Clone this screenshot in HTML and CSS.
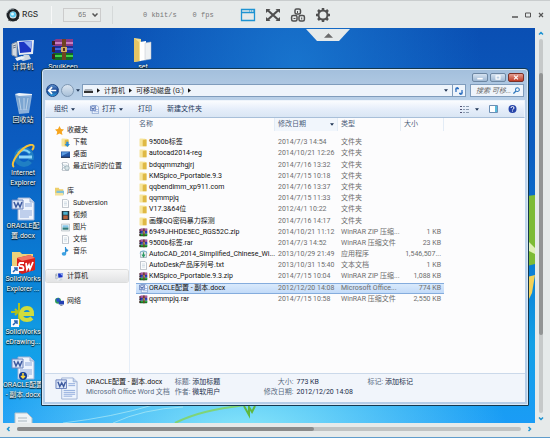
FILE: index.html
```html
<!DOCTYPE html>
<html lang="zh-CN">
<head>
    <meta charset="UTF-8">
    <meta name="viewport" content="width=device-width, initial-scale=1.0">
    <title>RGS</title>
    <link rel="stylesheet" href="styles.css">
</head>
<body>
    <!-- Shared icons -->
    <svg class="sprite" aria-hidden="true">
        <symbol id="i-folder" viewBox="0 0 12 12">
            <path d="M1 1h7l2 1v9H1z" fill="#f3dc86"/>
            <path d="M1 1h4v10H1z" fill="#f7e59a"/>
            <path d="M5 3l5-1v9H5z" fill="#dfb945"/>
        </symbol>
        <symbol id="i-rar" viewBox="0 0 24 24">
            <path d="M2 3l3-2h17v7H2z" fill="#8b3a86"/>
            <path d="M3 4h19v2H3z" fill="#c77fc0"/>
            <path d="M2 8h20v7H2z" fill="#1b2e96"/>
            <path d="M4 10h18v2H4z" fill="#4463dc"/>
            <path d="M2 15h20v6l-2 1H2z" fill="#116b24"/>
            <path d="M4 17h18v2H4z" fill="#3cd047"/>
            <path d="M1 3h3v4H1zM1 9h3v5H1zM1 16h3v5H1z" fill="#42201f"/>
            <path d="M11 1h4v21h-4z" fill="#6e4322"/>
            <path d="M10 9h6v5h-6z" fill="#d0ad62"/>
            <path d="M12 10h2v3h-2z" fill="#553018"/>
        </symbol>
        <symbol id="i-word" viewBox="0 0 24 24">
            <path d="M7 1h12l4 4v18H7z" fill="#eef4fd" stroke="#9eb2d4"/>
            <path d="M19 1v4h4" fill="#c5d4ee" stroke="#9eb2d4"/>
            <path d="M14 7h7M14 9h7M9 14h12M9 16h12M9 18h12M9 20h9" stroke="#8faadb"/>
            <path d="M1 3h11v9H1z" fill="#dce6f8" stroke="#6d84bd"/>
            <path d="M3 5l2 5 2-4 2 4 2-5" fill="none" stroke="#3d5a9f" stroke-width="1.5"/>
        </symbol>
        <symbol id="i-word-small" viewBox="0 0 12 12">
            <path d="M3 .5h6l2.500 2.500v8.500H3z" fill="#f4f8fe" stroke="#7f9ccc"/>
            <path d="M8 6h3M5 9h6" stroke="#8faadb"/>
            <path d="M.5 1.500h7v6h-7z" fill="#dfe8f8" stroke="#4f6db2"/>
            <path d="M2 3l1 3 1-2 1 2 1-3" fill="none" stroke="#2d4d9a"/>
        </symbol>
        <symbol id="i-monitor" viewBox="0 0 24 24">
            <path d="M1 6l5-2v15l-5-2z" fill="#d4dae0" stroke="#8b98a8"/>
            <path d="M2 8l3-1M2 10l3-1" stroke="#6a7788"/>
            <path d="M6 3l17-1-1 14-14 1z" fill="#e8edf2"/>
            <path d="M8 4l13-1-1 11-11 1z" fill="#1b35c4"/>
            <path d="M13 4l8-1-1 8z" fill="#90adf4"/>
            <path d="M13 17h5l2 4-8 2-3-2z" fill="#ced7df"/>
            <path d="M4 20l7-2 3 2-8 3z" fill="#edf1f4"/>
        </symbol>
        <symbol id="i-page" viewBox="0 0 12 12">
            <path d="M2 .5h6l2 2v9H2z" fill="#fbfcfd" stroke="#a9b2bb"/>
            <path d="M4 4h4M4 6h4M4 8h4" stroke="#b2c4d4" stroke-width=".7"/>
        </symbol>
        <symbol id="i-down" viewBox="0 0 6 4"><path d="M0 0h6L3 4z" fill="#1f3454"/></symbol>
        <symbol id="i-right" viewBox="0 0 4 6"><path d="M0 0v6l4-3z" fill="#111"/></symbol>
    </svg>

    <div class="client">
        <!-- Client toolbar -->
        <header class="topbar">
            <svg class="logo" viewBox="0 0 14 14">
                <circle cx="7" cy="7" r="5" fill="none" stroke="#1d2226" stroke-width="3"/>
                <path d="M1 5a6 6 0 0 1 7-4" fill="none" stroke="#9aa4aa" stroke-width="1"/>
                <circle cx="7" cy="6.500" r="3" fill="#5cc8ee"/>
                <circle cx="6.500" cy="6" r="1.500" fill="#d4f5ff"/>
                <path d="M2 12l3 1M10 13l3-3" stroke="#555" stroke-width="1"/>
            </svg>
            <span class="brand">RGS</span>
            <label class="quality">
                <select aria-label="Quality"><option>65</option></select>
                <svg viewBox="0 0 6 4"><path d="M.5.5L3 3 5.500.5" fill="none" stroke="#555" stroke-width="1.500"/></svg>
            </label>
            <span class="stat rate">0 kbit/s</span>
            <span class="stat fps">0 fps</span>
            <div class="tools">
                <button aria-label="Window">
                    <svg viewBox="0 0 16 14"><path d="M1.500 1.500h13v11h-13zM1.500 4.500h13" fill="none" stroke="#1e93d2" stroke-width="1.300"/><path d="M9 3h1M11 3h1M13 3h1" stroke="#1e93d2"/></svg>
                </button>
                <button aria-label="Full screen">
                    <svg viewBox="0 0 16 14"><path d="M3 2.500l10 9M13 2.500l-10 9" stroke="#505050" stroke-width="2.200"/><path d="M1 1h4.500L1 5zM15 1h-4.500L15 5zM1 13h4.500L1 9zM15 13h-4.500L15 9z" fill="#505050"/></svg>
                </button>
                <button aria-label="Send keys">
                    <svg viewBox="0 0 16 14"><g fill="none" stroke="#505050" stroke-width="1.500"><rect x="5" y="1" width="5.500" height="5" rx="1.500"/><rect x="1.600" y="7.500" width="5.400" height="5.500" rx="1.500"/><rect x="9" y="7.500" width="5.400" height="5.500" rx="1.500"/><path d="M7.500 3v2M3.500 10.500h2M11.700 9.500v2" stroke-width="1"/></g></svg>
                </button>
                <button aria-label="Settings">
                    <svg viewBox="0 0 16 14"><circle cx="8" cy="7" r="4.500" fill="none" stroke="#505050" stroke-width="2"/><path d="M8 0v2.500M8 11.500V14M1 7h2.500M12.500 7H15M3 2l2 2M11 10l2 2M13 2l-2 2M5 10l-2 2" stroke="#505050" stroke-width="2.500"/></svg>
                </button>
            </div>
            <div class="controls">
                <button aria-label="Minimize"><svg viewBox="0 0 6 6"><path d="M0 5h6" stroke="#555" stroke-width="1.500"/></svg></button>
                <button aria-label="Maximize"><svg viewBox="0 0 6 6"><path d="M.5 1h5v4h-5z" fill="none" stroke="#555"/></svg></button>
                <button aria-label="Close"><svg viewBox="0 0 6 6"><path d="M1 1l4 4M5 1L1 5" stroke="#555" stroke-width="1.200"/></svg></button>
            </div>
            <button class="tab" aria-label="Hide toolbar"><svg viewBox="0 0 10 5"><path d="M0 5l5-5 5 5z" fill="#6b6b6b"/></svg></button>
        </header>

        <!-- Remote desktop -->
        <main class="desktop">
            <svg class="wallpaper" viewBox="0 0 532 395" preserveAspectRatio="none" aria-hidden="true">
                <path d="M172 395c20-10 40-14 70-18" fill="none" stroke="#7fd477" stroke-width="2"/>
                <path d="M110 395q30-14 70-16M60 395q50-6 90-18" fill="none" stroke="#bff2f5" opacity=".6"/>
                <path d="M241 378l5 9v-8l3 5 3-6" fill="none" stroke="#5fb83e" stroke-width="2"/>
                <path d="M524 168l8-1v69l-8 2z" fill="#7dbb35"/>
                <path d="M524 212l8 8v6l-8-4z" fill="#dff0b4"/>
                <path d="M524 249l8-2-3 18-5 10z" fill="#f3d257"/>
            </svg>
            <div class="icons">
                <button><svg><use href="#i-monitor"/></svg>计算机</button>
                <button>
                    <svg viewBox="0 0 24 24"><path d="M4 3l17 1-3 18-10 1z" fill="#b8cfe4" opacity=".75"/><path d="M5 5l14 1-2 12H8z" fill="#6f9dcc" opacity=".6"/><path d="M4 3l4-1 13 1v1L8 5z" fill="#eef4fa"/><path d="M8 7l2 12M13 7v12M17 7l-2 12" stroke="#e4eef8" opacity=".6"/></svg>回收站
                </button>
                <button>
                    <svg viewBox="0 0 24 24"><circle cx="13" cy="13" r="7.500" fill="none" stroke="#1f7fc4" stroke-width="5"/><path d="M7 9q6-6 12 0" fill="none" stroke="#7fd0f5" stroke-width="2"/><path d="M8 13h13" stroke="#8fd6f8" stroke-width="3"/><path d="M17 16h6l-2 3z" fill="#0c5fba"/><path d="M3 23C-2 20 10 3 19 1c5-1 4 3 2 5" fill="none" stroke="#f3c23a" stroke-width="2"/></svg>Internet Explorer
                </button>
                <button><svg><use href="#i-word"/></svg>ORACLE配<br>置.docx</button>
                <button>
                    <svg viewBox="0 0 24 24"><path d="M1 2h8l2 2h11v17H1z" fill="#ecd27b"/><path d="M6 8l13-3 5 3v12l-13 4-5-3z" fill="#d9201d"/><path d="M6 8l13-3 5 3-13 3z" fill="#f37562"/><path d="M13 13H9q-2 2 0 3 5 0 3 4H8M15 13l1 6 2-4 1 4 3-7" fill="none" stroke="#fff" stroke-width="1.800"/><path d="M0 16h8v8H0z" fill="#f6f9fc"/><path d="M2 22l4-4M3 18h3v3" fill="none" stroke="#2565b5" stroke-width="1.500"/></svg>SolidWorks<br>Explorer ...
                </button>
                <button>
                    <svg viewBox="0 0 24 24"><path d="M8 0v22M0 9h6M4 6l3 3-3 3" fill="none" stroke="#b0c11b" stroke-width="2"/><path d="M12 11h9q0-6-5-6t-6 6q0 6 6 6 3 0 5-2" fill="none" stroke="#cfdc3d" stroke-width="4"/><path d="M0 16h8v8H0z" fill="#f6f9fc"/><path d="M2 22l4-4M3 18h3v3" fill="none" stroke="#2565b5" stroke-width="1.500"/></svg>SolidWorks<br>eDrawing...
                </button>
                <button>
                    <svg viewBox="0 0 24 24"><use href="#i-word"/><circle cx="12" cy="20" r="4" fill="#123d94"/><path d="M12 17v5M10 20l2 2 2-2" fill="none" stroke="#ffd93a" stroke-width="1.500"/></svg>ORACLE配置<br>- 副本.docx
                </button>
                <button><svg viewBox="0 0 24 24"><path d="M4 4h12l5 5v15H4z" fill="#eef3f6" stroke="#b3c1ca"/><path d="M7 9h9M7 12h9" stroke="#a9b7c0"/></svg></button>
                <button class="second"><svg><use href="#i-rar"/></svg>SoulKeep</button>
                <button class="fourth">
                    <svg viewBox="0 0 24 24"><path d="M3 0l7 1v22l-7 1z" fill="#f4df91"/><path d="M9 4l6-1v19l-6 1z" fill="#fff"/><path d="M14 5l6-1v17l-6 1z" fill="#eef1f3" stroke="#bcc3c9" stroke-width=".5"/><path d="M3 0l5 4v19l-5 1z" fill="#e3c465"/></svg>set
                </button>
            </div>

            <!-- Explorer window -->
            <section class="window">
                <div class="titlebar">
                    <button aria-label="最小化"><svg viewBox="0 0 15 9"><path d="M4 6h7" stroke="#fff" stroke-width="2"/></svg></button>
                    <button aria-label="最大化"><svg viewBox="0 0 15 9"><path d="M5 2.500h5v4H5z" fill="none" stroke="#fff" stroke-width="1.500"/></svg></button>
                    <button class="close" aria-label="关闭"><svg viewBox="0 0 15 9"><path d="M5 2l5 5M10 2L5 7" stroke="#fff" stroke-width="1.500"/></svg></button>
                </div>
                <div class="navrow">
                    <button class="round back" aria-label="后退"><svg viewBox="0 0 13 13"><path d="M2 6.500h9M6 2.500l-4 4 4 4" fill="none" stroke="#fff" stroke-width="2"/></svg></button>
                    <button class="round" aria-label="前进"></button>
                    <svg class="down"><use href="#i-down"/></svg>
                    <nav class="address">
                        <svg class="drive" viewBox="0 0 9 5"><path d="M1 1h7l1 2H0z" fill="#aab0b8"/><path d="M0 3h9v2H0z" fill="#333"/></svg>
                        <svg class="right"><use href="#i-right"/></svg>
                        <a href="#">计算机</a>
                        <svg class="right"><use href="#i-right"/></svg>
                        <a href="#">可移动磁盘 (G:)</a>
                        <svg class="right"><use href="#i-right"/></svg>
                        <svg class="down last"><use href="#i-down"/></svg>
                        <button class="refresh" aria-label="刷新"><svg viewBox="0 0 8 8"><path d="M1 5V1.500h3M.5 3L2.500 0M7 3v3.500H4M7.500 5l-2 3" fill="none" stroke="#2d6fc0" stroke-width="1.300"/></svg></button>
                    </nav>
                    <label class="search">
                        <input type="text" placeholder="搜索 可移..." aria-label="搜索">
                        <svg viewBox="0 0 8 8"><circle cx="5" cy="3" r="2.200" fill="none" stroke="#2f78bd" stroke-width="1.200"/><path d="M3.500 4.500L.5 7.500" stroke="#2f78bd" stroke-width="1.500"/></svg>
                    </label>
                </div>
                <div class="commands">
                    <button>组织 <svg class="down"><use href="#i-down"/></svg></button>
                    <button><svg class="cmd-word"><use href="#i-word-small"/></svg>打开 <svg class="down"><use href="#i-down"/></svg></button>
                    <button>打印</button>
                    <button>新建文件夹</button>
                    <div class="views">
                        <button aria-label="视图"><svg class="view" viewBox="0 0 9 8"><path d="M0 1.500h2M0 4.500h2M0 7.500h2" stroke="#557"/><path d="M3 1.500h2M6 1.500h3M3 4.500h2M6 4.500h3M3 7.500h2M6 7.500h3" stroke="#8a9bb0"/></svg><svg class="down"><use href="#i-down"/></svg></button>
                        <button aria-label="预览窗格"><svg class="view" viewBox="0 0 9 8"><path d="M.5.5h8v7h-8z" fill="#fff" stroke="#6d8fb4"/><path d="M6 1h2v6H6z" fill="#58bbdc"/></svg></button>
                        <button aria-label="帮助"><svg class="view" viewBox="0 0 9 8"><circle cx="4.500" cy="4" r="4" fill="#2644a9"/><path d="M3 3q0-1.500 1.500-1.500T6 3q0 1-1.500 1.500M4.500 5.500v1" fill="none" stroke="#fff"/></svg></button>
                    </div>
                </div>

                <div class="panes">
                    <nav class="tree">
                        <ul>
                            <li class="head"><a href="#"><svg viewBox="0 0 12 12"><path d="M6 0l2 4 4 .5-3 3 1 4.500-4-2-4 2 1-4.500-3-3L4 4z" fill="#f7a51e"/></svg>收藏夹</a></li>
                            <li><a href="#"><svg viewBox="0 0 12 12"><use href="#i-folder"/><path d="M7 5h3v3h2l-3.500 4L5 8h2z" fill="#288bd8"/></svg>下载</a></li>
                            <li><a href="#"><svg viewBox="0 0 12 12"><path d="M0 2h12v8H0z" fill="#2456a5"/><path d="M1 3h10L1 8z" fill="#5c9de2"/><path d="M0 9h12v1.500H0z" fill="#1b2b4c"/></svg>桌面</a></li>
                            <li><a href="#"><svg viewBox="0 0 12 12"><use href="#i-page"/><path d="M1 2l4 4-4 4" fill="none" stroke="#9ab0bb"/><circle cx="8" cy="8" r="3" fill="#d8e5e8" stroke="#91a6ad"/></svg>最近访问的位置</a></li>
                        </ul>
                        <ul>
                            <li class="head"><a href="#"><svg viewBox="0 0 12 12"><path d="M0 1h5l1 2h5v8H0z" fill="#edcf6b"/><path d="M2 5h10v5H2z" fill="#7fc0d9"/><path d="M0 8h11v3H0z" fill="#f3e19b"/></svg>库</a></li>
                            <li><a href="#"><svg><use href="#i-page"/></svg>Subversion</a></li>
                            <li><a href="#"><svg viewBox="0 0 12 12"><path d="M1 0h10v12H1z" fill="#20343f"/><path d="M3 1h6v4H3z" fill="#4bb0cf"/><path d="M3 6h6v5H3z" fill="#b6613c"/></svg>视频</a></li>
                            <li><a href="#"><svg viewBox="0 0 12 12"><path d="M.5 1.500h11v9H.5z" fill="#fff" stroke="#a6b2ba"/><path d="M2 3h8v3H2z" fill="#83c5e8"/><path d="M2 6h8v3H2z" fill="#317c7b"/></svg>图片</a></li>
                            <li><a href="#"><svg><use href="#i-page"/></svg>文档</a></li>
                            <li><a href="#"><svg viewBox="0 0 12 12"><path d="M6 0q1 3 4 4-1 3-3 2v3z" fill="#2b8fd6"/><path d="M6 0v9" stroke="#2b8fd6" stroke-width="1.500"/><ellipse cx="4" cy="9" rx="3" ry="2.500" fill="#3fa2e2"/></svg>音乐</a></li>
                        </ul>
                        <ul>
                            <li class="head current"><a href="#"><svg><use href="#i-monitor"/></svg>计算机</a></li>
                        </ul>
                        <ul>
                            <li class="head"><a href="#"><svg viewBox="0 0 12 12"><circle cx="4" cy="5" r="4" fill="#2f9e57"/><path d="M1 3l4-2 2 4-4 2z" fill="#2a55c8"/><path d="M5 5h7v5H5z" fill="#2340b4"/><path d="M7 10h3v2H7z" fill="#8a94a5"/></svg>网络</a></li>
                        </ul>
                    </nav>

                    <div class="files">
                        <table>
                            <colgroup><col class="c-name"><col class="c-date"><col class="c-type"><col class="c-size"></colgroup>
                            <thead>
                                <tr><th>名称</th><th class="sorted">修改日期<svg class="down"><use href="#i-down"/></svg></th><th>类型</th><th>大小</th></tr>
                            </thead>
                            <tbody>
                                <tr><td><svg><use href="#i-folder"/></svg>9500b标签</td><td>2014/7/3 14:54</td><td>文件夹</td><td></td></tr>
                                <tr><td><svg><use href="#i-folder"/></svg>autocad2014-reg</td><td>2014/10/21 12:26</td><td>文件夹</td><td></td></tr>
                                <tr><td><svg><use href="#i-folder"/></svg>bdqqmmzhgjrj</td><td>2014/7/16 13:32</td><td>文件夹</td><td></td></tr>
                                <tr><td><svg><use href="#i-folder"/></svg>KMSpico_Pportable.9.3</td><td>2014/7/15 10:18</td><td>文件夹</td><td></td></tr>
                                <tr><td><svg><use href="#i-folder"/></svg>qqbendimm_xp911.com</td><td>2014/7/16 13:37</td><td>文件夹</td><td></td></tr>
                                <tr><td><svg><use href="#i-folder"/></svg>qqmmpjq</td><td>2014/7/15 11:33</td><td>文件夹</td><td></td></tr>
                                <tr><td><svg><use href="#i-folder"/></svg>V17.3&amp;64位</td><td>2012/4/1 10:22</td><td>文件夹</td><td></td></tr>
                                <tr><td><svg><use href="#i-folder"/></svg>画蝶QQ密码暴力探测</td><td>2014/7/16 14:17</td><td>文件夹</td><td></td></tr>
                                <tr><td><svg><use href="#i-rar"/></svg>6949JHHDE5EC_RGS52C.zip</td><td>2014/10/21 11:12</td><td>WinRAR ZIP 压缩...</td><td>1 KB</td></tr>
                                <tr><td><svg><use href="#i-rar"/></svg>9500b标签.rar</td><td>2014/7/3 14:52</td><td>WinRAR 压缩文件</td><td>23 KB</td></tr>
                                <tr><td><svg viewBox="0 0 12 12"><path d="M2 2h8v8H2z" fill="#e4eaee" stroke="#9aa8b0"/><path d="M6 3v5M4 6l2 3 2-3" fill="none" stroke="#2c9a63" stroke-width="1.500"/><path d="M1 4q5-6 10 0" fill="none" stroke="#5fb4d8"/></svg>AutoCAD_2014_Simplified_Chinese_Wi...</td><td>2013/10/29 21:49</td><td>应用程序</td><td>1,546,507...</td></tr>
                                <tr><td><svg><use href="#i-page"/></svg>AutoDesk产品序列号.txt</td><td>2013/10/31 15:40</td><td>文本文档</td><td>1 KB</td></tr>
                                <tr><td><svg><use href="#i-rar"/></svg>KMSpico_Pportable.9.3.zip</td><td>2014/7/15 10:04</td><td>WinRAR ZIP 压缩...</td><td>1,088 KB</td></tr>
                                <tr class="selected"><td><svg><use href="#i-word-small"/></svg>ORACLE配置 - 副本.docx</td><td>2012/12/20 14:08</td><td>Microsoft Office...</td><td>774 KB</td></tr>
                                <tr><td><svg><use href="#i-rar"/></svg>qqmmpjq.rar</td><td>2014/7/15 10:58</td><td>WinRAR 压缩文件</td><td>2,550 KB</td></tr>
                            </tbody>
                        </table>
                    </div>
                </div>

                <footer class="details">
                    <svg class="preview"><use href="#i-word"/></svg>
                    <div class="d-name"><strong>ORACLE配置 - 副本.docx</strong><span>Microsoft Office Word 文档</span></div>
                    <div class="d-author"><span>标题: <b>添加标题</b></span><span>作者: <b>微软用户</b></span></div>
                    <div class="d-size"><span>大小:</span><b>773 KB</b><span>修改日期:</span><b>2012/12/20 14:08</b></div>
                    <div><span>标记: <b>添加标记</b></span></div>
                </footer>
            </section>
        </main>

        <!-- Scroll bars -->
        <div class="vscroll">
            <svg viewBox="0 0 6 4"><path d="M1 3.500l2-2 2 2" fill="none" stroke="#1e93d2" stroke-width="1.500"/></svg>
            <div class="track"><div class="thumb"></div></div>
            <svg viewBox="0 0 6 4"><path d="M1 .5l2 2 2-2" fill="none" stroke="#1e93d2" stroke-width="1.500"/></svg>
        </div>
        <div class="hscroll">
            <svg viewBox="0 0 4 6"><path d="M3.500 1l-2 2 2 2" fill="none" stroke="#1e93d2" stroke-width="1.500"/></svg>
            <div class="track"><div class="thumb"></div></div>
            <svg viewBox="0 0 4 6"><path d="M.5 1l2 2-2 2" fill="none" stroke="#1e93d2" stroke-width="1.500"/></svg>
        </div>
    </div>
</body>
</html>
```

FILE: styles.css
```css
/* General */
* {
    box-sizing: border-box;
}

body {
    margin: 0;
    font-family: Roboto, "Noto Sans CJK SC", sans-serif;
    font-size: 7px;
    line-height: 10px;
    color: #222;
    background-color: #e6eaea;
}

svg {
    display: block;
    flex: none;
}

button {
    font: inherit;
    color: inherit;
    padding: 0;
    border: none;
    background: none;
    cursor: pointer;
}

a {
    color: inherit;
    text-decoration: none;
}

b {
    font-weight: normal;
    color: #1d2f4c;
}

.sprite {
    position: absolute;
    width: 0;
    height: 0;
}

.down {
    width: 4px;
    height: 3px;
}

.right {
    width: 3px;
    height: 5px;
}

/* Client frame */
.client {
    display: grid;
    grid-template-columns: 1fr 15px;
    grid-template-rows: 28px 1fr 11px;
    height: 100vh;
    padding-left: 3px;
    padding-bottom: 3px;
    border-top: 1px solid #c9cdce;
    border-bottom: 1px solid #5f9ccb;
}

/* Client toolbar */
.topbar {
    grid-column: 1 / 3;
    position: relative;
    z-index: 2;
    display: flex;
    align-items: center;
    margin-top: -1px;
    font-family: "Liberation Mono", monospace;
}

.logo {
    width: 14px;
    height: 14px;
    margin-left: 3px;
}

.brand {
    width: 29px;
    margin-left: 2px;
    font-size: 9px;
}

.quality {
    display: flex;
    align-items: center;
    padding-left: 11px;
    padding-right: 11px;
    border-left: 1px solid #f7f8f8;
    border-right: 1px solid #d5d9d9;
    height: 18px;
}

.quality select {
    appearance: none;
    width: 38px;
    height: 14px;
    padding: 0 14px;
    border: 1px solid #ccc;
    background-color: #e9eceb;
    font: inherit;
    color: #777;
}

.quality svg {
    width: 6px;
    height: 4px;
    margin-left: -9px;
    margin-right: 3px;
}

.stat {
    color: #777;
}

.rate {
    margin-left: 30px;
}

.fps {
    margin-left: 16px;
}

.tools {
    display: flex;
    gap: 9px;
    margin-left: 26px;
}

.tools svg {
    width: 16px;
    height: 14px;
}

.controls {
    display: flex;
    gap: 7px;
    margin-left: auto;
    margin-right: 6px;
}

.controls svg {
    width: 6px;
    height: 6px;
}

/* Pull-down tab that hangs over the desktop */
.tab {
    position: absolute;
    top: 100%;
    left: 303px;
    width: 44px;
    height: 12px;
    background-color: #e6eaea;
    clip-path: polygon(0 0, 100% 0, 75% 100%, 25% 100%);
}

.tab svg {
    width: 9px;
    height: 5px;
    margin: 0 auto;
}

/* Remote desktop */
.desktop {
    position: relative;
    overflow: hidden;
    margin-top: -1px;
    background-image:
        radial-gradient(ellipse 50% 30% at 45% 103%, rgba(150, 240, 250, 0.9), rgba(60, 200, 250, 0)),
        radial-gradient(ellipse at 55% 10%, rgba(30, 130, 215, 0.7), rgba(20, 110, 200, 0) 45%),
        linear-gradient(#0a4fb3, #0b5cc0 30%, #0a7dd4 60%, #12a0e6 80%, #1a9cf6);
}

.wallpaper {
    position: absolute;
    width: 100%;
    height: 100%;
}

.icons {
    position: relative;
    display: grid;
    grid-auto-flow: column;
    grid-template-rows: repeat(8, 53px);
    grid-template-columns: repeat(4, 40px);
    padding-top: 10px;
}

.icons button {
    display: flex;
    flex-direction: column;
    align-items: center;
    color: #fff;
    text-shadow: 0 1px 1px #000, 0 0 2px #033;
}

.icons svg {
    width: 24px;
    height: 24px;
}

.icons .fourth {
    grid-column: 4;
    grid-row: 1;
}

/* Explorer window */
.window {
    position: absolute;
    top: 40px;
    left: 38px;
    right: 6px;
    bottom: 17px;
    display: flex;
    flex-direction: column;
    padding: 0 3px 3px;
    border: 1px solid #14384f;
    border-radius: 4px 4px 1px 1px;
    background-image: linear-gradient(#a3bfdc, #b9d0e8 30px, #c3d8ee 130px, #b4cde8);
    box-shadow: inset 0 0 0 1px #d9e8f6;
}

.titlebar {
    display: flex;
    justify-content: flex-end;
    gap: 2px;
    padding: 4px 1px 2px;
}

.titlebar button {
    border: 1px solid #6d87a3;
    border-radius: 2px;
    background-image: linear-gradient(#d5e2f0, #9fb8d3);
}

.titlebar svg {
    width: 14px;
    height: 7px;
}

.titlebar .close {
    border-color: #7a3028;
    background-image: linear-gradient(#e3a093, #c03a25);
}

.navrow {
    display: flex;
    align-items: center;
    gap: 2px;
    padding: 0 1px 3px;
}

.round {
    width: 13px;
    height: 13px;
    border: 1px solid #7f98b3;
    border-radius: 50%;
    background-image: linear-gradient(#dbe6f1, #a9c0d8);
}

.back {
    border-color: #1d4585;
    background-image: linear-gradient(#5f93d0, #15408e 50%, #2fa0e0);
}

.back svg {
    width: 11px;
    height: 11px;
}

.address {
    flex: 1;
    display: flex;
    align-items: center;
    gap: 4px;
    height: 13px;
    padding-left: 1px;
    border: 1px solid #7f9cbc;
    background-color: #eef4fb;
}

.drive {
    width: 9px;
    height: 5px;
}

.last {
    margin-left: auto;
}

.refresh {
    height: 11px;
    padding: 0 2px;
    border-left: 1px solid #7f9cbc;
}

.refresh svg {
    width: 8px;
    height: 8px;
}

.search {
    display: flex;
    align-items: center;
    width: 54px;
    height: 13px;
    margin-left: 2px;
    padding: 0 3px 0 5px;
    border: 1px solid #7f9cbc;
    background-color: #eef4fb;
}

.search input {
    flex: 1;
    min-width: 0;
    padding: 0;
    border: none;
    background: none;
    font: inherit;
    font-style: italic;
}

.search input::placeholder {
    color: #666;
}

.search svg {
    width: 7px;
    height: 7px;
}

/* Command bar */
.commands {
    display: flex;
    align-items: center;
    gap: 15px;
    height: 18px;
    padding: 0 7px 0 8px;
    border: 1px solid #eef4fb;
    border-bottom-color: #a8bfd9;
    background-image: linear-gradient(#fafcfe, #e6eefa 50%, #dae6f4);
    color: #1e395b;
}

.commands button {
    display: flex;
    align-items: center;
    gap: 3px;
}

.cmd-word {
    width: 9px;
    height: 9px;
}

.views {
    display: flex;
    gap: 10px;
    margin-left: auto;
}

.views .down {
    margin-left: 3px;
}

.view {
    width: 9px;
    height: 8px;
}

/* Navigation tree */
.panes {
    flex: 1;
    display: flex;
    min-height: 0;
    background-color: #fcfcfd;
}

.tree {
    width: 85px;
    padding-top: 6px;
    border-right: 1px solid #e6eef8;
}

.tree ul {
    margin: 0 0 13px;
    padding: 0;
    list-style: none;
}

.tree li {
    padding-left: 16px;
}

.tree .head {
    padding-left: 10px;
}

.tree .current {
    margin: 0 1px;
    padding-left: 9px;
    border-radius: 2px;
    background-image: linear-gradient(#f6f6f6, #e2e3e4);
    box-shadow: 0 0 0 1px #dcdddd;
}

.tree a {
    display: flex;
    align-items: center;
    gap: 3px;
    line-height: 12px;
}

.tree svg {
    width: 9px;
    height: 9px;
}

/* File list */
.files {
    flex: 1;
    min-width: 0;
    padding-left: 6px;
}

table {
    table-layout: fixed;
    width: 308px;
    height: 187px;
    border-collapse: separate;
    border-spacing: 0;
    line-height: 11px;
}

.c-name {
    width: 139px;
}

.c-date {
    width: 63px;
}

.c-type {
    width: 63px;
}

.c-size {
    width: 43px;
}

th,
td {
    padding: 0 3px;
    text-align: left;
    font-weight: normal;
    white-space: nowrap;
    color: #6d6d6d;
}

th {
    height: 13px;
    border-right: 1px solid #e3ecf6;
    color: #4c607a;
}

.sorted {
    background-color: #f1f6fc;
}

.sorted svg {
    float: right;
    margin-top: 4px;
}

tbody::before {
    content: "";
    display: block;
    height: 6px;
}

td:first-child {
    padding: 0 0 0 3px;
    color: #111;
}

td:last-child {
    text-align: right;
}

td svg {
    float: left;
    width: 9px;
    height: 9px;
    margin-top: 1px;
    margin-right: 1px;
}

.selected td {
    background-image: linear-gradient(#dcebfc, #bfd9f8);
    box-shadow: inset 0 1px #84acdd, inset 0 -1px #84acdd;
}

/* Details pane */
.details {
    display: flex;
    gap: 5px;
    height: 29px;
    padding: 3px 10px;
    border-top: 1px solid #cbd9ea;
    background-color: #f1f5fb;
    color: #5a6b82;
}

.details strong {
    font-weight: normal;
    color: #111;
}

.preview {
    width: 23px;
    height: 23px;
    margin-right: 3px;
}

.d-name,
.d-author {
    display: flex;
    flex-direction: column;
}

.d-author {
    width: 84px;
}

.d-size {
    display: grid;
    grid-template-columns: auto 66px;
    grid-auto-rows: 10px;
    column-gap: 3px;
    text-align: right;
}

.d-size b {
    text-align: left;
}

/* Scroll bars */
.vscroll {
    display: flex;
    flex-direction: column;
    align-items: center;
    gap: 4px;
    padding: 2px 3px 2px 0;
}

.vscroll svg {
    width: 6px;
    height: 4px;
}

.vscroll .track {
    flex: 1;
    width: 4px;
    border-radius: 2px;
    background-color: #c6c9c9;
}

.vscroll .thumb {
    height: 70%;
    margin-top: 34px;
    border-radius: 2px;
    background-color: #929494;
}

.hscroll {
    display: flex;
    align-items: center;
    gap: 7px;
    padding: 0 3px;
}

.hscroll svg {
    width: 4px;
    height: 6px;
}

.hscroll .track {
    flex: 1;
    height: 4px;
    border-radius: 2px;
    background-color: #c0c3c3;
}

.hscroll .thumb {
    width: 59%;
    height: 4px;
    border-radius: 2px;
    background-color: #8a8b8b;
}
```
